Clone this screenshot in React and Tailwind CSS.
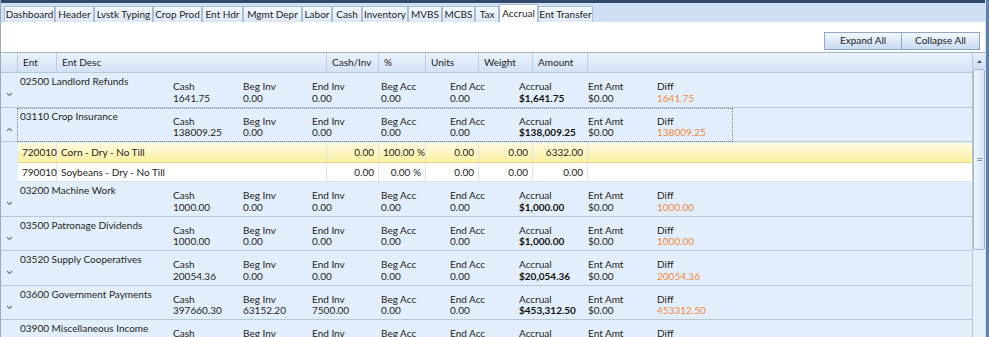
import React from "react";

const tabs = [
  ["Dashboard", 51],
  ["Header", 39],
  ["Lvstk Typing", 59],
  ["Crop Prod", 49],
  ["Ent Hdr", 41],
  ["Mgmt Depr", 59],
  ["Labor", 30],
  ["Cash", 30],
  ["Inventory", 46],
  ["MVBS", 34],
  ["MCBS", 33],
  ["Tax", 24],
  ["Accrual", 39],
  ["Ent Transfer", 55],
];

const labels = ["Cash", "Beg Inv", "End Inv", "Beg Acc", "End Acc", "Accrual", "Ent Amt", "Diff"];

const groups = [
  { t: "02500 Landlord Refunds", v: ["1641.75", "0.00", "0.00", "0.00", "0.00", "$1,641.75", "$0.00", "1641.75"] },
  { t: "03110 Crop Insurance", v: ["138009.25", "0.00", "0.00", "0.00", "0.00", "$138,009.25", "$0.00", "138009.25"], open: true },
  { t: "03200 Machine Work", v: ["1000.00", "0.00", "0.00", "0.00", "0.00", "$1,000.00", "$0.00", "1000.00"] },
  { t: "03500 Patronage Dividends", v: ["1000.00", "0.00", "0.00", "0.00", "0.00", "$1,000.00", "$0.00", "1000.00"] },
  { t: "03520 Supply Cooperatives", v: ["20054.36", "0.00", "0.00", "0.00", "0.00", "$20,054.36", "$0.00", "20054.36"] },
  { t: "03600 Government Payments", v: ["397660.30", "63152.20", "7500.00", "0.00", "0.00", "$453,312.50", "$0.00", "453312.50"] },
  { t: "03900 Miscellaneous Income", v: ["", "", "", "", "", "", "", ""] },
];

const headCols = [
  ["", 17],
  ["Ent", 39],
  ["Ent Desc", 270],
  ["Cash/Inv", 52],
  ["%", 47],
  ["Units", 53],
  ["Weight", 54],
  ["Amount", 55],
];

function Chevron({ up }) {
  return (
    <svg width="7" height="5" viewBox="0 0 7 5" className="block">
      {up ? (
        <polyline points="1,4 3.5,1.5 6,4" fill="none" stroke="#6b7a8c" strokeWidth="1.1" />
      ) : (
        <polyline points="1,1 3.5,3.5 6,1" fill="none" stroke="#6b7a8c" strokeWidth="1.1" />
      )}
    </svg>
  );
}

function GroupRow({ g }) {
  return (
    <div className="relative flex h-[34.5px] shrink-0 border-b border-[#b9c6d6] bg-[#e2eefb]">
      <div className="flex w-[17px] shrink-0 items-start justify-center pt-[19px]">
        <Chevron up={g.open} />
      </div>
      <div className="w-[155px] shrink-0 whitespace-nowrap pl-[2px] pt-[2px] leading-[12px]">{g.t}</div>
      {labels.map((l, i) => (
        <div key={l} className={`${i === 0 ? "w-[70px]" : "w-[69px]"} shrink-0 whitespace-nowrap pt-[8px] leading-[11.5px]`}>
          <div>{l}</div>
          <div className={i === 5 ? "font-bold text-[#111]" : i === 7 ? "text-[#f08a3c]" : ""}>{g.v[i]}</div>
        </div>
      ))}
      {g.open && (
        <div className="pointer-events-none absolute left-[16px] top-[0px] h-[34px] w-[716px] border border-dotted border-[#7d8590]" />
      )}
    </div>
  );
}

function DetailRow({ cells, hl }) {
  const widths = [39, 270, 52, 47, 53, 54, 55];
  return (
    <div className="flex h-[19.5px] shrink-0">
      <div className="w-[17px] shrink-0 bg-[#e2eefb]" />
      <div
        className={`flex flex-1 border-b ${
          hl
            ? "border-[#e6d78a] bg-gradient-to-b from-[#fffbe0] to-[#fbef9f]"
            : "border-[#dfe3e8] bg-white"
        }`}
      >
        {widths.map((w, i) => (
          <div
            key={i}
            style={{ width: w }}
            className={`shrink-0 whitespace-nowrap border-r border-[#dfe3e8] px-[4px] leading-[19px] ${
              i >= 2 ? "text-right" : ""
            }`}
          >
            {cells[i]}
          </div>
        ))}
        <div className="flex-1" />
      </div>
    </div>
  );
}

export default function App() {
  return (
    <div
      className="flex h-[337px] w-[989px] overflow-hidden bg-white text-[10px] text-[#1e1e1e]"
      style={{ fontFamily: 'Lato, "Noto Sans", sans-serif' }}
    >
      <div className="flex min-w-0 flex-1 flex-col border-l border-[#9aa9bd]">
        <div className="h-[3px] shrink-0 bg-[#33496b]" />
        <div className="flex h-[19px] shrink-0 items-end bg-[#cfe0f5] pl-[3px]">
          {tabs.map(([t, w]) => {
            const active = t === "Accrual";
            return (
              <div
                key={t}
                style={{ width: w }}
                className={`flex shrink-0 items-center justify-center whitespace-nowrap border border-b-0 border-[#a9bdd8] ${
                  active ? "h-[18px] bg-white" : "h-[16px] bg-gradient-to-b from-[#f3f8fe] to-[#dce8f7]"
                }`}
              >
                {t}
              </div>
            );
          })}
        </div>
        <div className="flex h-[31px] shrink-0 items-center justify-end border-b border-[#a4b5ca] pr-[5px]">
          <div className="flex pt-[7px]">
            {["Expand All", "Collapse All"].map((b, i) => (
              <div
                key={b}
                className={`flex h-[18px] w-[78px] items-center justify-center border border-[#8fa8c8] bg-gradient-to-b from-[#f2f7fd] via-[#dde9f8] to-[#c8daf0] ${
                  i === 1 ? "border-l-0" : ""
                }`}
              >
                {b}
              </div>
            ))}
          </div>
        </div>
        <div className="flex min-h-0 flex-1">
          <div className="flex min-w-0 flex-1 flex-col">
            <div className="flex h-[20px] shrink-0 border-b border-[#b5c7dd] bg-gradient-to-b from-[#eaf2fc] to-[#d2e2f5]">
              {headCols.map(([h, w], i) => (
                <div key={i} style={{ width: w }} className="shrink-0 border-r border-[#bccde2] pl-[5px] leading-[19px]">
                  {h}
                </div>
              ))}
              <div className="flex-1" />
            </div>
            <GroupRow g={groups[0]} />
            <GroupRow g={groups[1]} />
            <div className="h-[1px] shrink-0 bg-[#e2eefb]" />
            <DetailRow hl cells={["720010", "Corn - Dry - No Till", "0.00", "100.00 %", "0.00", "0.00", "6332.00"]} />
            <DetailRow cells={["790010", "Soybeans - Dry - No Till", "0.00", "0.00 %", "0.00", "0.00", "0.00"]} />
            {groups.slice(2).map((g) => (
              <GroupRow key={g.t} g={g} />
            ))}
          </div>
          <div className="flex w-[13px] shrink-0 flex-col border-l border-[#b8c9de] bg-[#dde9f7]">
            <div className="flex h-[16px] shrink-0 items-center justify-center bg-gradient-to-b from-[#e8f0fa] to-[#d0e0f3]">
              <svg width="5" height="3" viewBox="0 0 5 3">
                <polygon points="0,3 2.5,0 5,3" fill="#4a5a70" />
              </svg>
            </div>
            <div className="flex h-[181px] shrink-0 flex-col items-center justify-center rounded-[2px] border border-[#9fb6d4] bg-gradient-to-r from-[#f0f6fd] to-[#d6e4f5]">
              <div className="mb-[1px] h-[1px] w-[5px] bg-[#8396ae]" />
              <div className="h-[1px] w-[5px] bg-[#8396ae]" />
            </div>
            <div className="flex-1 bg-[#e6eef9]" />
          </div>
        </div>
      </div>
      <div className="w-[4px] shrink-0 border-l border-[#cfe0f5] bg-[#5d80b3]" />
    </div>
  );
}
